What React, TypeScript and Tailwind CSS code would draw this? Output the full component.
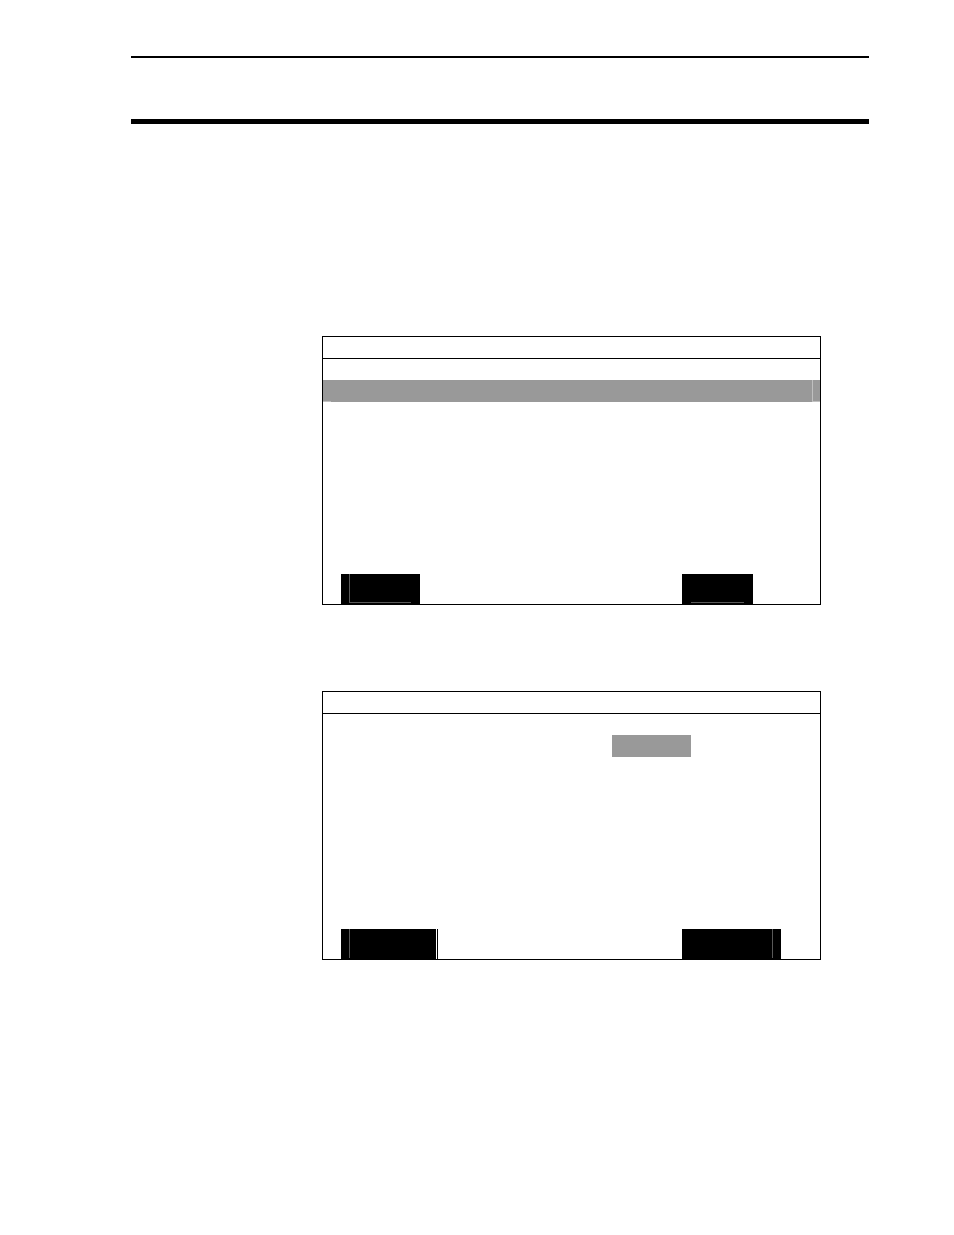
import type { ReactNode } from "react";

type SoftKeyProps = {
  label: string;
  className: string;
  children?: ReactNode;
};

function SoftKey({ label, className, children }: SoftKeyProps) {
  return (
    <button
      type="button"
      aria-label={label}
      className={`flex h-[30px] bg-black ${className}`}
    >
      {children}
    </button>
  );
}

type ScreenProps = {
  label: string;
  row: ReactNode;
  leftKey: ReactNode;
  rightKey: ReactNode;
};

function Screen({ label, row, leftKey, rightKey }: ScreenProps) {
  return (
    <section aria-label={label} className="flex flex-col border border-black">
      <header className="h-[22px] border-b border-black" />
      <div className="h-[215px] pt-[21px]">{row}</div>
      <footer className="grid grid-cols-[341fr_138fr] pl-[18px]">
        <div className="flex">{leftKey}</div>
        <div className="flex">{rightKey}</div>
      </footer>
    </section>
  );
}

export default function App() {
  return (
    <main className="min-h-screen bg-white pt-14 pr-[85px] pb-16 pl-[131px] font-['Liberation_Sans',sans-serif]">
      <header className="h-[68px] border-t-2 border-b-[5px] border-black" />

      <div className="mt-[212px] mr-12 ml-[191px] flex flex-col gap-[86px]">
        <Screen
          label="List screen"
          row={
            <div className="flex h-[22px] items-end bg-[#999999]">
              <span className="h-px w-2 bg-[#c0c0c0]" />
              <span className="ml-auto h-full w-2 border-b border-l border-[#c0c0c0]" />
            </div>
          }
          leftKey={
            <SoftKey label="Left key" className="w-[79px] pr-[9px] pb-px pl-2">
              <span className="h-full w-full border-b border-l border-[#595959]" />
            </SoftKey>
          }
          rightKey={
            <SoftKey label="Right key" className="w-[71px] px-[9px] pb-px">
              <span className="h-full w-full border-b border-[#595959]" />
            </SoftKey>
          }
        />

        <Screen
          label="Entry screen"
          row={<div className="ml-[289px] h-[22px] w-[79px] bg-[#999999]" />}
          leftKey={
            <>
              <SoftKey label="Left key" className="w-[95px] pb-px pl-2">
                <span className="h-full w-px bg-[#595959]" />
              </SoftKey>
              <span className="ml-px h-[30px] w-px bg-black" />
            </>
          }
          rightKey={
            <SoftKey label="Right key" className="w-[99px] justify-end pr-2 pb-px">
              <span className="h-full w-px bg-[#595959]" />
            </SoftKey>
          }
        />
      </div>
    </main>
  );
}
